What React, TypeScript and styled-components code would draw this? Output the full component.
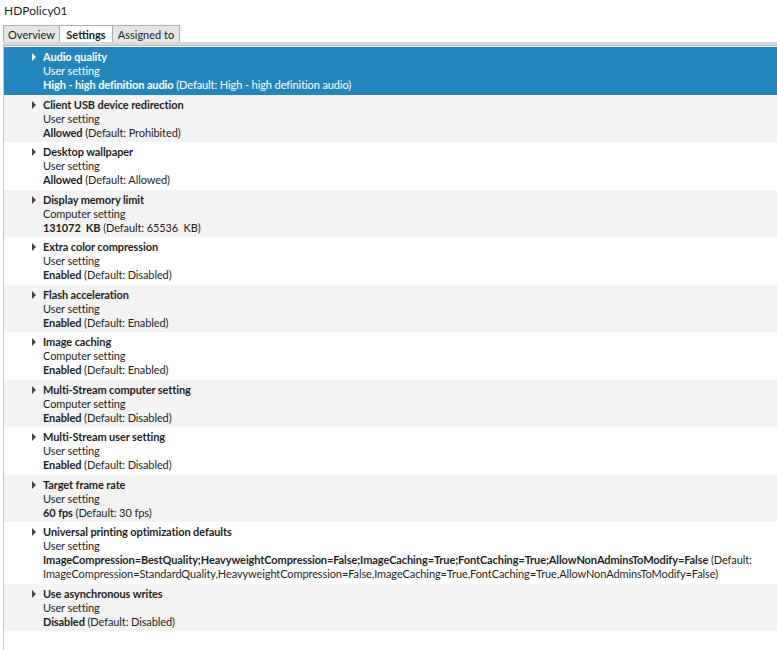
import * as React from "react";
import styled, { createGlobalStyle } from "styled-components";

const GlobalStyle = createGlobalStyle`
  html, body {
    margin: 0;
    padding: 0;
    background: #fff;
  }
  body {
    font-family: Lato, "Liberation Sans", sans-serif;
    font-size: 11px;
    color: #1e1e1e;
  }
`;

const Page = styled.div`
  width: 777px;
  height: 650px;
  overflow: hidden;
  display: flex;
  flex-direction: column;
  background: #fff;
`;

const Title = styled.div`
  font-size: 12px;
  line-height: 14px;
  padding: 4px 0 0 4px;
  height: 22px;
  box-sizing: border-box;
  color: #1e1e1e;
`;

const TabStrip = styled.div`
  display: flex;
  align-items: flex-end;
  padding-left: 3px;
  height: 17px;
  margin-top: 3px;
`;

const Tab = styled.div<{ $active?: boolean; $w: number }>`
  width: ${({ $w }) => $w}px;
  height: 17px;
  box-sizing: border-box;
  display: flex;
  align-items: center;
  justify-content: center;
  font-size: 11px;
  font-weight: ${({ $active }) => ($active ? 700 : 400)};
  color: #222;
  background: ${({ $active }) => ($active ? "#fff" : "#e6e6e6")};
  border: 1px solid #adadad;
  border-bottom: none;
  & + & {
    border-left: none;
  }
`;

const TabLine = styled.div`
  height: 3px;
  margin-left: 3px;
  background: #dadada;
  border-bottom: 1px solid #b9b9b9;
`;

const List = styled.div`
  flex: 1;
  margin-left: 3px;
  padding-top: 1px;
  border-left: 1px solid #c9c9c9;
  display: flex;
  flex-direction: column;
`;

const Row = styled.div<{ $selected?: boolean; $alt?: boolean }>`
  display: flex;
  padding: 3px 0 2.5px 26px;
  line-height: 14px;
  letter-spacing: -0.1px;
  color: ${({ $selected }) => ($selected ? "#fff" : "#1e1e1e")};
  background: ${({ $selected, $alt }) =>
    $selected ? "#2286bc" : $alt ? "#f3f3f3" : "#fff"};
`;

const Arrow = styled.div<{ $selected?: boolean }>`
  flex: none;
  width: 0;
  height: 0;
  margin: 3px 7px 0 2px;
  border-top: 4px solid transparent;
  border-bottom: 4px solid transparent;
  border-left: 4px solid ${({ $selected }) => ($selected ? "#fff" : "#444")};
`;

const Body = styled.div`
  display: flex;
  flex-direction: column;
  min-width: 0;
  padding-right: 8px;
`;

const Name = styled.div`
  font-weight: 700;
`;

const Scope = styled.div``;

const Value = styled.div`
  b {
    font-weight: 700;
  }
`;

type Setting = {
  name: string;
  scope: string;
  value: string;
  def: string;
};

const settings: Setting[] = [
  {
    name: "Audio quality",
    scope: "User setting",
    value: "High - high definition audio",
    def: "High - high definition audio",
  },
  {
    name: "Client USB device redirection",
    scope: "User setting",
    value: "Allowed",
    def: "Prohibited",
  },
  {
    name: "Desktop wallpaper",
    scope: "User setting",
    value: "Allowed",
    def: "Allowed",
  },
  {
    name: "Display memory limit",
    scope: "Computer setting",
    value: "131072\u00a0 KB",
    def: "65536\u00a0 KB",
  },
  {
    name: "Extra color compression",
    scope: "User setting",
    value: "Enabled",
    def: "Disabled",
  },
  {
    name: "Flash acceleration",
    scope: "User setting",
    value: "Enabled",
    def: "Enabled",
  },
  {
    name: "Image caching",
    scope: "Computer setting",
    value: "Enabled",
    def: "Enabled",
  },
  {
    name: "Multi-Stream computer setting",
    scope: "Computer setting",
    value: "Enabled",
    def: "Disabled",
  },
  {
    name: "Multi-Stream user setting",
    scope: "User setting",
    value: "Enabled",
    def: "Disabled",
  },
  {
    name: "Target frame rate",
    scope: "User setting",
    value: "60 fps",
    def: "30 fps",
  },
  {
    name: "Universal printing optimization defaults",
    scope: "User setting",
    value:
      "ImageCompression=BestQuality;HeavyweightCompression=False;ImageCaching=True;FontCaching=True;AllowNonAdminsToModify=False",
    def: "ImageCompression=StandardQuality,HeavyweightCompression=False,ImageCaching=True,FontCaching=True,AllowNonAdminsToModify=False",
  },
  {
    name: "Use asynchronous writes",
    scope: "User setting",
    value: "Disabled",
    def: "Disabled",
  },
];

export default function App() {
  return (
    <Page>
      <GlobalStyle />
      <Title>HDPolicy01</Title>
      <TabStrip>
        <Tab $w={57}>Overview</Tab>
        <Tab $w={53} $active>
          Settings
        </Tab>
        <Tab $w={67}>Assigned to</Tab>
      </TabStrip>
      <TabLine />
      <List>
        {settings.map((s, i) => (
          <Row key={s.name} $selected={i === 0} $alt={i % 2 === 1}>
            <Arrow $selected={i === 0} />
            <Body>
              <Name>{s.name}</Name>
              <Scope>{s.scope}</Scope>
              <Value>
                <b>{s.value}</b> (Default: {s.def})
              </Value>
            </Body>
          </Row>
        ))}
      </List>
    </Page>
  );
}
